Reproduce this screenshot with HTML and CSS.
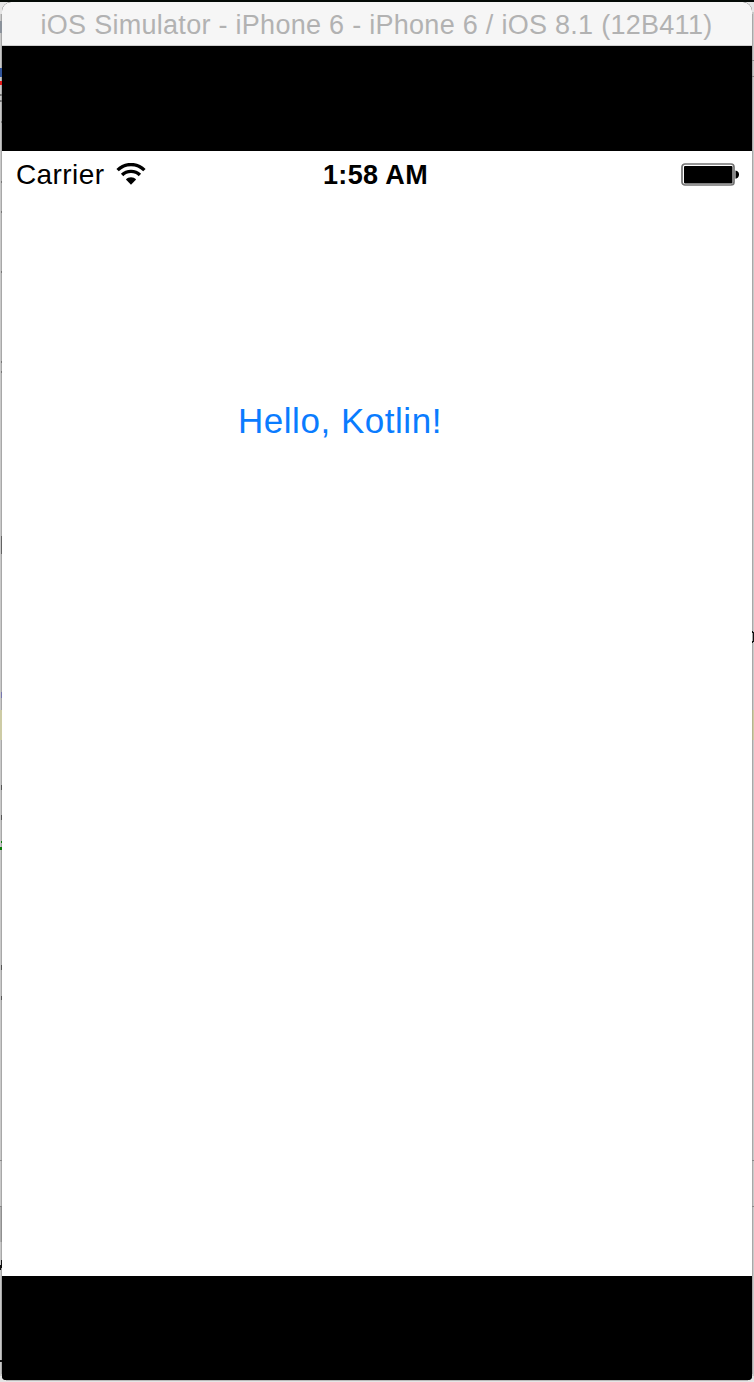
FILE: index.html
```html
<!DOCTYPE html>
<html lang="en">
<head>
<meta charset="utf-8">
<title>iOS Simulator</title>
<link rel="stylesheet" href="styles.css">
</head>
<body>
<div class="desktop">
  <svg class="backdrop" width="754" height="1382" viewBox="0 0 754 1382" aria-hidden="true">
    <path fill="#c9c9c9" d="M0 2h754v1380H0z"/>
    <path fill="#a8a8a8" d="M1 14h1v1360H1zM752 14h1v1360h-1z"/>
    <path fill="#e5e5e5" d="M0 2h8v12H0zM746 2h8v10h-8zM0 1376h754v6H0z"/>
    <path fill="#b8b8b8" d="M6 1380h742v1H6z"/>
    <path fill="#050b07" d="M0 0h754v2H0z"/>
    <path fill="#8b929b" d="M0 21h2v12H0z"/>
    <path fill="#31549a" d="M0 68h2v9H0z"/>
    <path fill="#e31919" d="M0 81h2v4H0z"/>
    <path fill="#777" d="M0 94h2v2H0zM0 100h2v2H0zM1 121h1v2H1zM1 181h1v2H1zM1 211h1v2H1zM1 271h1v2H1zM1 361h1v2H1zM1 371h1v2H1z"/>
    <path fill="#636363" d="M1 536h1v18H1z"/>
    <path fill="#7777af" d="M1 692h1v6H1z"/>
    <path fill="#cdcba5" d="M0 710h2v30H0zM753 710h1v30h-1z"/>
    <path fill="#b5b38e" d="M752 710h1v30h-1z"/>
    <path fill="#555" d="M1 785h1v5H1zM1 815h1v5H1zM1 965h1v5H1zM1 996h1v4H1z"/>
    <path fill="#087808" d="M0 847h2v3H0zM1 841h1v2H1z"/>
    <path fill="#b0b0b0" d="M0 1207h1v35H0z"/>
    <path fill="#8f8f8f" d="M1 1207h1v35H1z"/>
    <path fill="#111" d="M752 631h1v2h-1zM752 641h1v2h-1zM753 632h1v10h-1zM1 1260h1v8H1zM0 1265h1v5H0zM0 1360h2v2H0z"/>
    <path fill="#888" d="M0 1160h2v1H0zM0 1206h2v1H0zM752 60h2v1h-2zM752 76h2v1h-2zM752 1160h2v1h-2zM752 1206h2v1h-2z"/>
  </svg>
  <main class="window">
    <header class="titlebar"><span class="title">iOS Simulator - iPhone 6 - iPhone 6 / iOS 8.1 (12B411)</span></header>
    <div class="letterbox"></div>
    <section class="screen">
      <div class="status">
        <div class="network">
          <span class="carrier">Carrier</span>
          <svg class="wifi" width="30" height="24" viewBox="0 0 30 24">
            <path d="M1.6 7.2C8.7-.4 21.3-.4 28.4 7.2M6.1 12c4.8-4.9 13-4.9 17.8 0" fill="none" stroke="#000" stroke-width="3.3"/>
            <path d="M9.9 16.4c2.5-3 7.7-3 10.2 0L15 21.8z"/>
          </svg>
        </div>
        <time class="clock">1:58 AM</time>
        <div class="power">
          <svg class="battery" width="58" height="24" viewBox="0 0 58 24">
            <rect x="1" y="1" width="52" height="21" rx="3" fill="#fff" stroke="#737373" stroke-width="1.7"/>
            <rect x="3" y="3" width="48.5" height="17.5" rx="1"/>
            <path d="M54.5 7.5c4.7.4 4.7 7.8 0 8.2z"/>
          </svg>
        </div>
      </div>
      <div class="content"><span class="greeting">Hello, Kotlin!</span></div>
    </section>
    <div class="letterbox"></div>
  </main>
</div>
</body>
</html>
```
FILE: styles.css
```css
* { box-sizing: border-box; }
body { margin: 0; font-family: "Liberation Sans", Arial, sans-serif; }
.desktop { position: relative; width: 754px; height: 1382px; padding: 2px; overflow: hidden; }
.backdrop { position: absolute; inset: 0; }
.window {
  position: relative;
  display: flex;
  flex-direction: column;
  height: 1378px;
  overflow: hidden;
  border-radius: 9px 9px 4px 4px;
  background: #000;
}
.titlebar {
  height: 44px;
  flex: none;
  display: flex;
  justify-content: center;
  padding-right: 1px;
  border-bottom: 1px solid #d0d0d0;
  background: #f6f6f6;
  color: #b2b2b2;
}
.title { font-size: 27px; line-height: 46px; letter-spacing: 0.28px; white-space: nowrap; }
.letterbox { flex: 1; background: #000; }
.letterbox:first-of-type { flex: none; height: 105px; }
.screen { flex: none; height: 1125px; background: #fff; }
.status {
  height: 48px;
  display: grid;
  grid-template-columns: 1fr auto 1fr;
  align-items: center;
  color: #000;
}
.network { display: flex; align-items: center; padding-left: 14px; gap: 12px; }
.carrier { font-size: 28px; line-height: 48px; letter-spacing: 0.4px; }
.wifi { display: block; }
.clock { padding-right: 3px; font-size: 27px; font-weight: 700; line-height: 48px; letter-spacing: 0.35px; white-space: nowrap; }
.power { display: flex; justify-content: flex-end; padding-right: 13px; }
.battery { display: block; }
.content { padding: 200px 0 0 236px; }
.greeting { display: block; font-size: 35px; line-height: 44px; letter-spacing: 0.53px; color: #0a7cff; white-space: nowrap; }
```
